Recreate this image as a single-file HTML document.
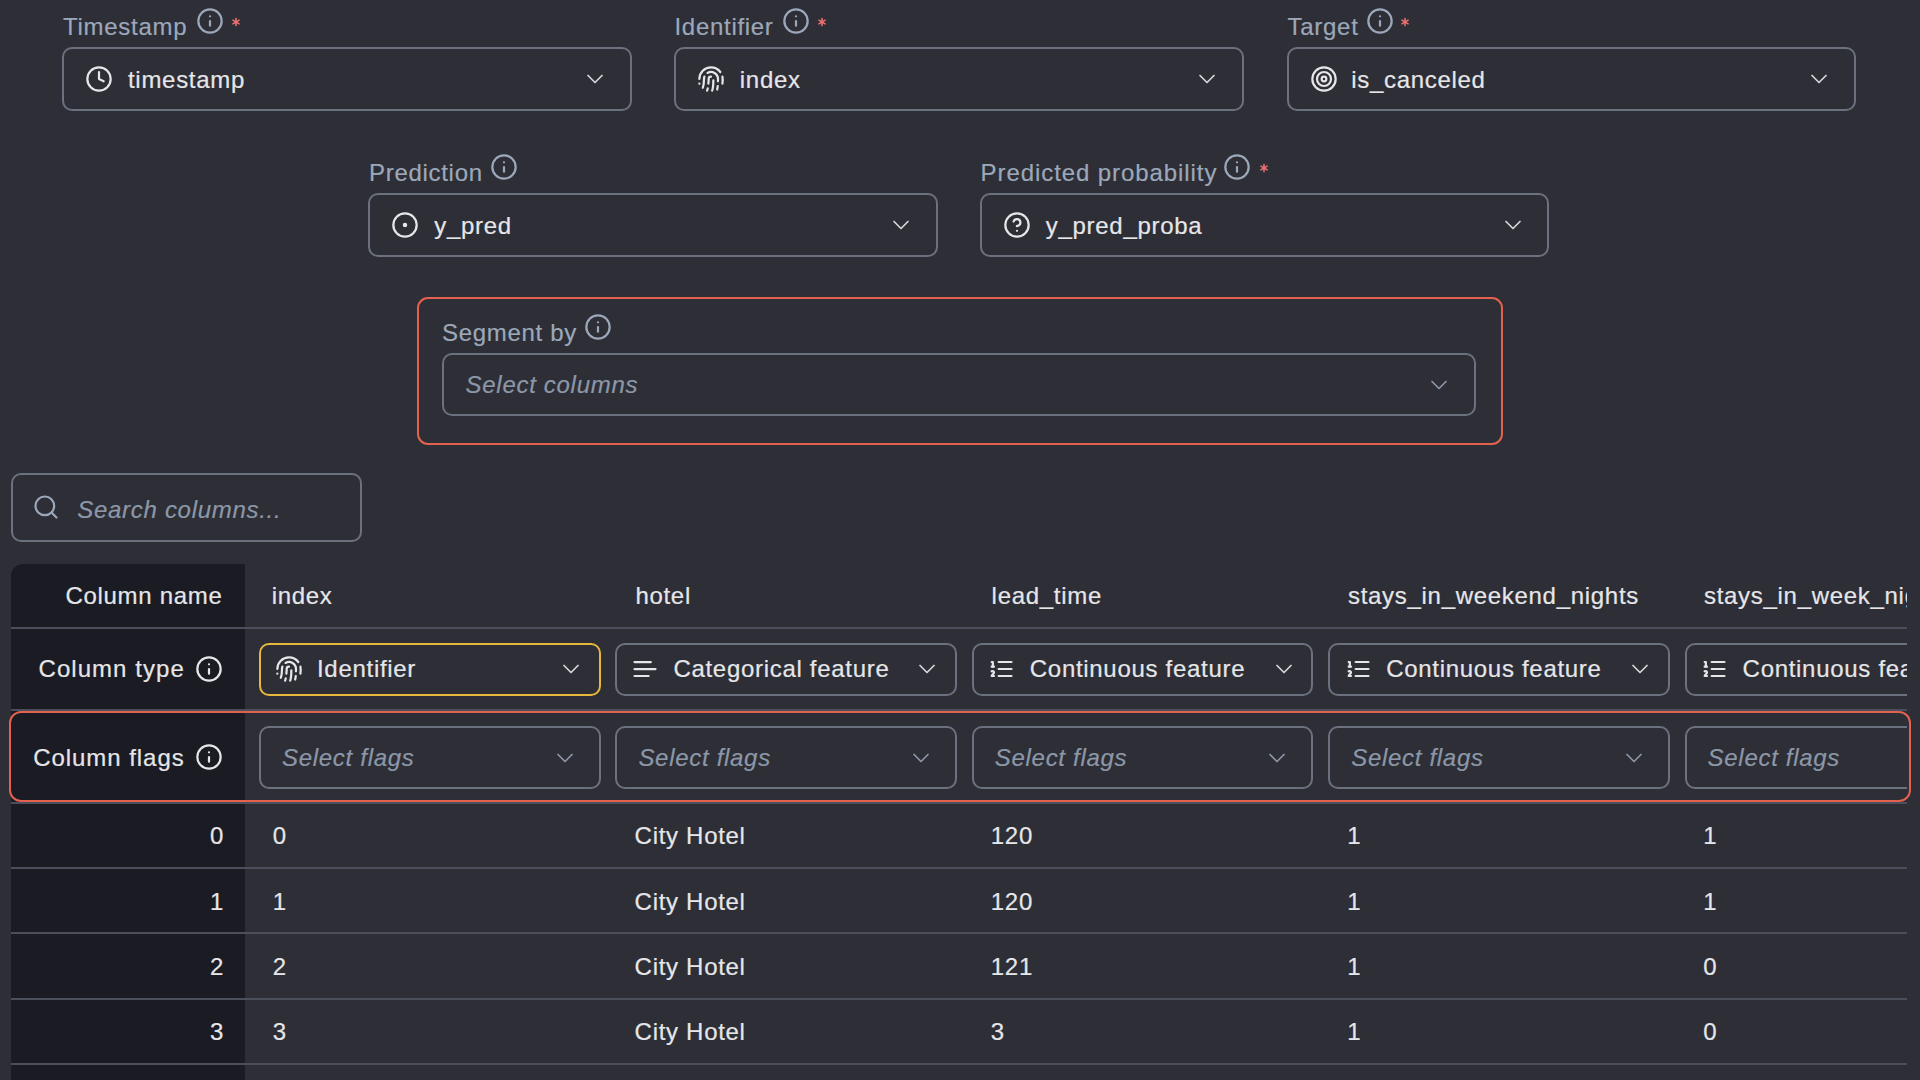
<!DOCTYPE html>
<html><head><meta charset="utf-8">
<style>
*{box-sizing:border-box;margin:0;padding:0}
html,body{width:1920px;height:1080px;overflow:hidden;background:#2d2e36;font-family:"Liberation Sans",sans-serif;position:relative}
.a{position:absolute}
.t{position:absolute;font-size:24px;line-height:24px;letter-spacing:0.7px;white-space:nowrap;-webkit-text-stroke:0.2px currentColor}
.lbl{color:#9ca8ba}
.wh{color:#e6e6e9}
.ph{color:#8c97a8;font-style:italic}
.box{position:absolute;border:2px solid #6b717e;border-radius:10px}
svg.i{position:absolute;width:28px;height:28px;fill:none;stroke:currentColor;stroke-width:1.9;stroke-linecap:round;stroke-linejoin:round}
</style></head><body>
<div class="t lbl" style="left:63.1px;top:14.58px">Timestamp</div>
<svg class="i" style="left:195.5px;top:7px;color:#9ca8ba" viewBox="0 0 24 24"><circle cx="12" cy="12" r="10"/><path d="M12 16v-4"/><path d="M12 8h.01"/></svg>
<svg class="a" style="left:231px;top:17.1px;width:10px;height:10px" viewBox="-5 -5 10 10"><g stroke="#ef7272" stroke-width="1.55" stroke-linecap="round"><path d="M0 -3.6V3.6"/><path d="M-3.1 -1.8L3.1 1.8"/><path d="M-3.1 1.8L3.1 -1.8"/></g></svg>
<div class="box" style="left:62px;top:47px;width:569.5px;height:64px"></div>
<svg class="i" style="left:84.9px;top:65px;color:#e6e6e9" viewBox="0 0 24 24"><circle cx="12" cy="12" r="10"/><polyline points="12 6 12 12 16 14"/></svg>
<div class="t wh" style="left:128px;top:67.58px">timestamp</div>
<svg class="i" style="left:580.7px;top:65px;color:#d4d6dc;stroke-width:1.5" viewBox="0 0 24 24"><path d="m6 9 6 6 6-6"/></svg>
<div class="t lbl" style="left:674.5px;top:14.58px">Identifier</div>
<svg class="i" style="left:781.6px;top:7px;color:#9ca8ba" viewBox="0 0 24 24"><circle cx="12" cy="12" r="10"/><path d="M12 16v-4"/><path d="M12 8h.01"/></svg>
<svg class="a" style="left:817.4px;top:17.1px;width:10px;height:10px" viewBox="-5 -5 10 10"><g stroke="#ef7272" stroke-width="1.55" stroke-linecap="round"><path d="M0 -3.6V3.6"/><path d="M-3.1 -1.8L3.1 1.8"/><path d="M-3.1 1.8L3.1 -1.8"/></g></svg>
<div class="box" style="left:674px;top:47px;width:570px;height:64px"></div>
<svg class="i" style="left:696.5px;top:65px;color:#e6e6e9" viewBox="0 0 24 24"><path d="M2 12C2 6.5 6.5 2 12 2a10 10 0 0 1 8 4"/><path d="M5 19.5C5.5 18 6 15 6 12c0-.7.12-1.37.34-2"/><path d="M17.29 21.02c.12-.6.43-2.3.5-3.02"/><path d="M12 10a2 2 0 0 0-2 2c0 1.02-.1 2.51-.26 4"/><path d="M8.65 22c.21-.66.45-1.32.57-2"/><path d="M14 13.12c0 2.38 0 6.38-1 8.88"/><path d="M2 16h.01"/><path d="M21.8 16c.2-2 .131-5.354 0-6"/><path d="M9 6.8a6 6 0 0 1 9 5.2c0 .47 0 1.17-.02 2"/></svg>
<div class="t wh" style="left:739.8px;top:67.58px">index</div>
<svg class="i" style="left:1193px;top:65px;color:#d4d6dc;stroke-width:1.5" viewBox="0 0 24 24"><path d="m6 9 6 6 6-6"/></svg>
<div class="t lbl" style="left:1287.6px;top:14.58px">Target</div>
<svg class="i" style="left:1365.8px;top:7px;color:#9ca8ba" viewBox="0 0 24 24"><circle cx="12" cy="12" r="10"/><path d="M12 16v-4"/><path d="M12 8h.01"/></svg>
<svg class="a" style="left:1400.4px;top:17.1px;width:10px;height:10px" viewBox="-5 -5 10 10"><g stroke="#ef7272" stroke-width="1.55" stroke-linecap="round"><path d="M0 -3.6V3.6"/><path d="M-3.1 -1.8L3.1 1.8"/><path d="M-3.1 1.8L3.1 -1.8"/></g></svg>
<div class="box" style="left:1286.5px;top:47px;width:569.5px;height:64px"></div>
<svg class="i" style="left:1309.5px;top:65px;color:#e6e6e9" viewBox="0 0 24 24"><circle cx="12" cy="12" r="10"/><circle cx="12" cy="12" r="6"/><circle cx="12" cy="12" r="2"/></svg>
<div class="t wh" style="left:1351.2px;top:67.58px">is_canceled</div>
<svg class="i" style="left:1805.2px;top:65px;color:#d4d6dc;stroke-width:1.5" viewBox="0 0 24 24"><path d="m6 9 6 6 6-6"/></svg>
<div class="t lbl" style="left:369px;top:160.78px">Prediction</div>
<svg class="i" style="left:490.4px;top:152.8px;color:#9ca8ba" viewBox="0 0 24 24"><circle cx="12" cy="12" r="10"/><path d="M12 16v-4"/><path d="M12 8h.01"/></svg>
<div class="box" style="left:368px;top:193px;width:569.7px;height:64px"></div>
<svg class="i" style="left:391.4px;top:210.8px;color:#e6e6e9" viewBox="0 0 24 24"><circle cx="12" cy="12" r="10"/><circle cx="12" cy="12" r="1"/></svg>
<div class="t wh" style="left:434.2px;top:213.58px">y_pred</div>
<svg class="i" style="left:887px;top:211px;color:#d4d6dc;stroke-width:1.5" viewBox="0 0 24 24"><path d="m6 9 6 6 6-6"/></svg>
<div class="t lbl" style="left:980.6px;top:160.78px;letter-spacing:0.92px">Predicted probability</div>
<svg class="i" style="left:1223.3px;top:152.8px;color:#9ca8ba" viewBox="0 0 24 24"><circle cx="12" cy="12" r="10"/><path d="M12 16v-4"/><path d="M12 8h.01"/></svg>
<svg class="a" style="left:1259px;top:163.2px;width:10px;height:10px" viewBox="-5 -5 10 10"><g stroke="#ef7272" stroke-width="1.55" stroke-linecap="round"><path d="M0 -3.6V3.6"/><path d="M-3.1 -1.8L3.1 1.8"/><path d="M-3.1 1.8L3.1 -1.8"/></g></svg>
<div class="box" style="left:980px;top:193px;width:569.3px;height:64px"></div>
<svg class="i" style="left:1003px;top:210.8px;color:#e6e6e9" viewBox="0 0 24 24"><circle cx="12" cy="12" r="10"/><path d="M9.09 9a3 3 0 0 1 5.83 1c0 2-3 3-3 3"/><path d="M12 17h.01"/></svg>
<div class="t wh" style="left:1045.8px;top:213.58px">y_pred_proba</div>
<svg class="i" style="left:1498.5px;top:211px;color:#d4d6dc;stroke-width:1.5" viewBox="0 0 24 24"><path d="m6 9 6 6 6-6"/></svg>
<div class="box" style="left:417px;top:297px;width:1086px;height:148px;border-color:#e2624f;border-radius:11px"></div>
<div class="t lbl" style="left:442px;top:320.78px">Segment by</div>
<svg class="i" style="left:584.4px;top:313.3px;color:#9ca8ba" viewBox="0 0 24 24"><circle cx="12" cy="12" r="10"/><path d="M12 16v-4"/><path d="M12 8h.01"/></svg>
<div class="box" style="left:442px;top:353px;width:1034px;height:63px"></div>
<div class="t ph" style="left:465.6px;top:372.68px">Select columns</div>
<svg class="i" style="left:1425.3px;top:370.8px;color:#8c97a8;stroke-width:1.5" viewBox="0 0 24 24"><path d="m6 9 6 6 6-6"/></svg>
<div class="box" style="left:11px;top:473.3px;width:350.7px;height:68.4px"></div>
<svg class="i" style="left:31.5px;top:493px;color:#9ca8ba" viewBox="0 0 24 24"><circle cx="11" cy="11" r="8"/><path d="m21 21-4.3-4.3"/></svg>
<div class="t ph" style="left:77.3px;top:497.98px">Search columns...</div>
<div class="a" style="left:11px;top:564px;width:1896px;height:516px;overflow:hidden">
<div class="a" style="left:0;top:0;width:233.5px;height:600px;background:#1b1c23;border-top-left-radius:12px"></div>
<div class="a" style="left:0;top:63px;width:1896px;height:2px;background:#4a4f5b"></div>
<div class="a" style="left:0;top:145px;width:1896px;height:2px;background:#4a4f5b"></div>
<div class="a" style="left:0;top:238px;width:1896px;height:2px;background:#4a4f5b"></div>
<div class="a" style="left:0;top:303px;width:1896px;height:2px;background:#4a4f5b"></div>
<div class="a" style="left:0;top:368.3px;width:1896px;height:2px;background:#4a4f5b"></div>
<div class="a" style="left:0;top:433.6px;width:1896px;height:2px;background:#4a4f5b"></div>
<div class="a" style="left:0;top:498.9px;width:1896px;height:2px;background:#4a4f5b"></div>
<div class="t wh" style="left:0;width:211.5px;text-align:right;top:19.88px">Column name</div>
<div class="t wh" style="left:27.5px;top:93.18px;letter-spacing:1.05px">Column type</div>
<svg class="i" style="left:184.4px;top:91px;color:#e6e6e9" viewBox="0 0 24 24"><circle cx="12" cy="12" r="10"/><path d="M12 16v-4"/><path d="M12 8h.01"/></svg>
<div class="t wh" style="left:22.2px;top:181.58px;letter-spacing:0.95px">Column flags</div>
<svg class="i" style="left:184.3px;top:178.8px;color:#e6e6e9" viewBox="0 0 24 24"><circle cx="12" cy="12" r="10"/><path d="M12 16v-4"/><path d="M12 8h.01"/></svg>
<div class="t wh" style="left:260.7px;top:19.88px">index</div>
<div class="box" style="left:248px;top:78.8px;width:341.5px;height:53px;border-color:#e6b83c"></div>
<svg class="i" style="left:263.5px;top:91.3px;color:#e6e6e9" viewBox="0 0 24 24"><path d="M2 12C2 6.5 6.5 2 12 2a10 10 0 0 1 8 4"/><path d="M5 19.5C5.5 18 6 15 6 12c0-.7.12-1.37.34-2"/><path d="M17.29 21.02c.12-.6.43-2.3.5-3.02"/><path d="M12 10a2 2 0 0 0-2 2c0 1.02-.1 2.51-.26 4"/><path d="M8.65 22c.21-.66.45-1.32.57-2"/><path d="M14 13.12c0 2.38 0 6.38-1 8.88"/><path d="M2 16h.01"/><path d="M21.8 16c.2-2 .131-5.354 0-6"/><path d="M9 6.8a6 6 0 0 1 9 5.2c0 .47 0 1.17-.02 2"/></svg>
<div class="t wh" style="left:306px;top:93.18px">Identifier</div>
<svg class="i" style="left:546px;top:91.3px;color:#d4d6dc;stroke-width:1.5" viewBox="0 0 24 24"><path d="m6 9 6 6 6-6"/></svg>
<div class="box" style="left:248px;top:162px;width:341.5px;height:63px"></div>
<div class="t ph" style="left:271px;top:181.58px">Select flags</div>
<svg class="i" style="left:539.6px;top:179.5px;color:#8c97a8;stroke-width:1.5" viewBox="0 0 24 24"><path d="m6 9 6 6 6-6"/></svg>
<div class="t wh" style="left:624.4px;top:19.88px">hotel</div>
<div class="box" style="left:604.4px;top:78.8px;width:341.5px;height:53px"></div>
<svg class="i" style="left:619.9px;top:91.3px;color:#e6e6e9" viewBox="0 0 24 24"><path d="M17 6.1H3"/><path d="M21 12.1H3"/><path d="M15.1 18H3"/></svg>
<div class="t wh" style="left:662.4px;top:93.18px">Categorical feature</div>
<svg class="i" style="left:902.4px;top:91.3px;color:#d4d6dc;stroke-width:1.5" viewBox="0 0 24 24"><path d="m6 9 6 6 6-6"/></svg>
<div class="box" style="left:604.4px;top:162px;width:341.5px;height:63px"></div>
<div class="t ph" style="left:627.4px;top:181.58px">Select flags</div>
<svg class="i" style="left:896px;top:179.5px;color:#8c97a8;stroke-width:1.5" viewBox="0 0 24 24"><path d="m6 9 6 6 6-6"/></svg>
<div class="t wh" style="left:980.6px;top:19.88px">lead_time</div>
<div class="box" style="left:960.8px;top:78.8px;width:341.5px;height:53px"></div>
<svg class="i" style="left:976.3px;top:91.3px;color:#e6e6e9" viewBox="0 0 24 24"><path d="M10 6h11"/><path d="M10 12h11"/><path d="M10 18h11"/><path d="M4 6h1v4"/><path d="M4 10h2"/><path d="M6 18H4c0-1 2-2 2-3s-1-1.5-2-1"/></svg>
<div class="t wh" style="left:1018.8px;top:93.18px">Continuous feature</div>
<svg class="i" style="left:1258.8px;top:91.3px;color:#d4d6dc;stroke-width:1.5" viewBox="0 0 24 24"><path d="m6 9 6 6 6-6"/></svg>
<div class="box" style="left:960.8px;top:162px;width:341.5px;height:63px"></div>
<div class="t ph" style="left:983.8px;top:181.58px">Select flags</div>
<svg class="i" style="left:1252.4px;top:179.5px;color:#8c97a8;stroke-width:1.5" viewBox="0 0 24 24"><path d="m6 9 6 6 6-6"/></svg>
<div class="t wh" style="left:1337px;top:19.88px">stays_in_weekend_nights</div>
<div class="box" style="left:1317.2px;top:78.8px;width:341.5px;height:53px"></div>
<svg class="i" style="left:1332.7px;top:91.3px;color:#e6e6e9" viewBox="0 0 24 24"><path d="M10 6h11"/><path d="M10 12h11"/><path d="M10 18h11"/><path d="M4 6h1v4"/><path d="M4 10h2"/><path d="M6 18H4c0-1 2-2 2-3s-1-1.5-2-1"/></svg>
<div class="t wh" style="left:1375.2px;top:93.18px">Continuous feature</div>
<svg class="i" style="left:1615.2px;top:91.3px;color:#d4d6dc;stroke-width:1.5" viewBox="0 0 24 24"><path d="m6 9 6 6 6-6"/></svg>
<div class="box" style="left:1317.2px;top:162px;width:341.5px;height:63px"></div>
<div class="t ph" style="left:1340.2px;top:181.58px">Select flags</div>
<svg class="i" style="left:1608.8px;top:179.5px;color:#8c97a8;stroke-width:1.5" viewBox="0 0 24 24"><path d="m6 9 6 6 6-6"/></svg>
<div class="t wh" style="left:1693px;top:19.88px">stays_in_week_nights</div>
<div class="box" style="left:1673.6px;top:78.8px;width:341.5px;height:53px"></div>
<svg class="i" style="left:1689.1px;top:91.3px;color:#e6e6e9" viewBox="0 0 24 24"><path d="M10 6h11"/><path d="M10 12h11"/><path d="M10 18h11"/><path d="M4 6h1v4"/><path d="M4 10h2"/><path d="M6 18H4c0-1 2-2 2-3s-1-1.5-2-1"/></svg>
<div class="t wh" style="left:1731.6px;top:93.18px">Continuous feature</div>
<svg class="i" style="left:1971.6px;top:91.3px;color:#d4d6dc;stroke-width:1.5" viewBox="0 0 24 24"><path d="m6 9 6 6 6-6"/></svg>
<div class="box" style="left:1673.6px;top:162px;width:341.5px;height:63px"></div>
<div class="t ph" style="left:1696.6px;top:181.58px">Select flags</div>
<svg class="i" style="left:1965.2px;top:179.5px;color:#8c97a8;stroke-width:1.5" viewBox="0 0 24 24"><path d="m6 9 6 6 6-6"/></svg>
<div class="t wh" style="left:0;width:213px;text-align:right;top:260.28px">0</div>
<div class="t wh" style="left:261.7px;top:260.28px">0</div>
<div class="t wh" style="left:623.6px;top:260.28px">City Hotel</div>
<div class="t wh" style="left:979.8px;top:260.28px">120</div>
<div class="t wh" style="left:1336.2px;top:260.28px">1</div>
<div class="t wh" style="left:1692.2px;top:260.28px">1</div>
<div class="t wh" style="left:0;width:213px;text-align:right;top:325.58px">1</div>
<div class="t wh" style="left:261.7px;top:325.58px">1</div>
<div class="t wh" style="left:623.6px;top:325.58px">City Hotel</div>
<div class="t wh" style="left:979.8px;top:325.58px">120</div>
<div class="t wh" style="left:1336.2px;top:325.58px">1</div>
<div class="t wh" style="left:1692.2px;top:325.58px">1</div>
<div class="t wh" style="left:0;width:213px;text-align:right;top:390.88px">2</div>
<div class="t wh" style="left:261.7px;top:390.88px">2</div>
<div class="t wh" style="left:623.6px;top:390.88px">City Hotel</div>
<div class="t wh" style="left:979.8px;top:390.88px">121</div>
<div class="t wh" style="left:1336.2px;top:390.88px">1</div>
<div class="t wh" style="left:1692.2px;top:390.88px">0</div>
<div class="t wh" style="left:0;width:213px;text-align:right;top:456.18px">3</div>
<div class="t wh" style="left:261.7px;top:456.18px">3</div>
<div class="t wh" style="left:623.6px;top:456.18px">City Hotel</div>
<div class="t wh" style="left:979.8px;top:456.18px">3</div>
<div class="t wh" style="left:1336.2px;top:456.18px">1</div>
<div class="t wh" style="left:1692.2px;top:456.18px">0</div>
<div class="t wh" style="left:0;width:213px;text-align:right;top:521.48px">4</div>
<div class="t wh" style="left:261.7px;top:521.48px">4</div>
<div class="t wh" style="left:623.6px;top:521.48px">City Hotel</div>
<div class="t wh" style="left:979.8px;top:521.48px">4</div>
<div class="t wh" style="left:1336.2px;top:521.48px">1</div>
<div class="t wh" style="left:1692.2px;top:521.48px">0</div>
</div>
<div class="box" style="left:9px;top:711px;width:1901.5px;height:91px;border-color:#e2624f;border-radius:12px"></div>
</body></html>
